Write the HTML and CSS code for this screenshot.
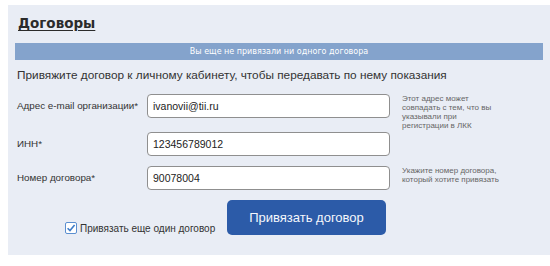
FILE: index.html
```html
<!DOCTYPE html>
<html lang="ru">
<head>
  <meta charset="UTF-8" />
  <title>Договоры</title>
  <link rel="stylesheet" href="styles.css">
</head>
<body>
  <div class="panel">
    <h1 class="title">Договоры</h1>
    <div class="notice">Вы еще не привязали ни одного договора</div>
    <p class="lead">Привяжите договор к личному кабинету, чтобы передавать по нему показания</p>

    <div class="form">
      <div class="row">
        <label class="label">Адрес e-mail организации*</label>
        <input class="field" type="text" value="ivanovii@tii.ru">
        <div class="hint">Этот адрес может совпадать с тем, что вы указывали при регистрации в ЛКК</div>
      </div>
      <div class="row row-inn">
        <label class="label">ИНН*</label>
        <input class="field" type="text" value="123456789012">
        <div class="hint"></div>
      </div>
      <div class="row">
        <label class="label">Номер договора*</label>
        <input class="field" type="text" value="90078004">
        <div class="hint">Укажите номер договора, который хотите привязать</div>
      </div>
    </div>

    <div class="actions">
      <label class="more">
        <span class="check">
          <svg width="12" height="12" viewBox="0 0 12 12">
            <rect x="0.5" y="0.5" width="11" height="11" rx="1.5" fill="#fff" stroke="#5b8fd0"/>
            <path d="M2.6 6.2 L5 8.6 L9.6 3" fill="none" stroke="#3f7cc8" stroke-width="1.6"/>
          </svg>
        </span>
        Привязать еще один договор
      </label>
      <button class="submit" type="button">Привязать договор</button>
    </div>
  </div>
</body>
</html>
```

FILE: styles.css
```css
* {
  box-sizing: border-box;
}

body {
  margin: 0;
  padding: 0;
  background-color: #ffffff;
  font-family: "Liberation Sans", Arial, sans-serif;
  color: #333;
}

.panel {
  margin: 5px 0 0 8px;
  width: 542px;
  height: 250px;
  background-color: #e9edf5;
  padding: 0 0 0 7px;
}

.title {
  margin: 0;
  padding: 10px 0 0 3px;
  height: 38px;
  font-family: "DejaVu Sans", Verdana, sans-serif;
  font-size: 13.5px;
  font-weight: 700;
  color: #2b2b2b;
  text-decoration: underline;
  text-underline-offset: 2px;
}

.notice {
  width: 528px;
  height: 17px;
  background-color: #84a3cc;
  color: #fff;
  font-family: "DejaVu Sans", Verdana, sans-serif;
  font-size: 8px;
  line-height: 17px;
  text-align: center;
}

.lead {
  margin: 0;
  padding: 8px 0 0 2px;
  height: 34px;
  font-size: 11.8px;
  color: #333;
}

.form {
  display: flex;
  flex-direction: column;
  gap: 10px;
  padding-left: 2px;
}

.row {
  display: flex;
  align-items: flex-start;
  height: 24px;
}

.row-inn {
  margin-top: 4px;
}

.label {
  width: 130px;
  padding-top: 6px;
  font-size: 9.8px;
  white-space: nowrap;
  color: #333;
}

.field {
  width: 243px;
  height: 24px;
  margin: 0;
  padding: 0 5px;
  border: 1px solid #8f8f8f;
  border-radius: 4px;
  background: #fff;
  font-family: inherit;
  font-size: 10.5px;
  color: #222;
  outline: none;
}

.hint {
  width: 97px;
  margin-left: 12px;
  font-size: 8px;
  line-height: 9px;
  color: #666;
}

.actions {
  display: flex;
  align-items: flex-start;
  padding-left: 50px;
  margin-top: 10px;
}

.more {
  display: flex;
  align-items: center;
  gap: 3px;
  margin-top: 22px;
  width: 162px;
  font-size: 10px;
  color: #333;
}

.check {
  display: flex;
}

.submit {
  width: 159px;
  height: 35px;
  border: none;
  border-radius: 5px;
  background-color: #2c5ba8;
  color: #f4f7fc;
  font-family: "Liberation Sans", Arial, sans-serif;
  font-size: 13px;
  font-weight: 400;
}
```
